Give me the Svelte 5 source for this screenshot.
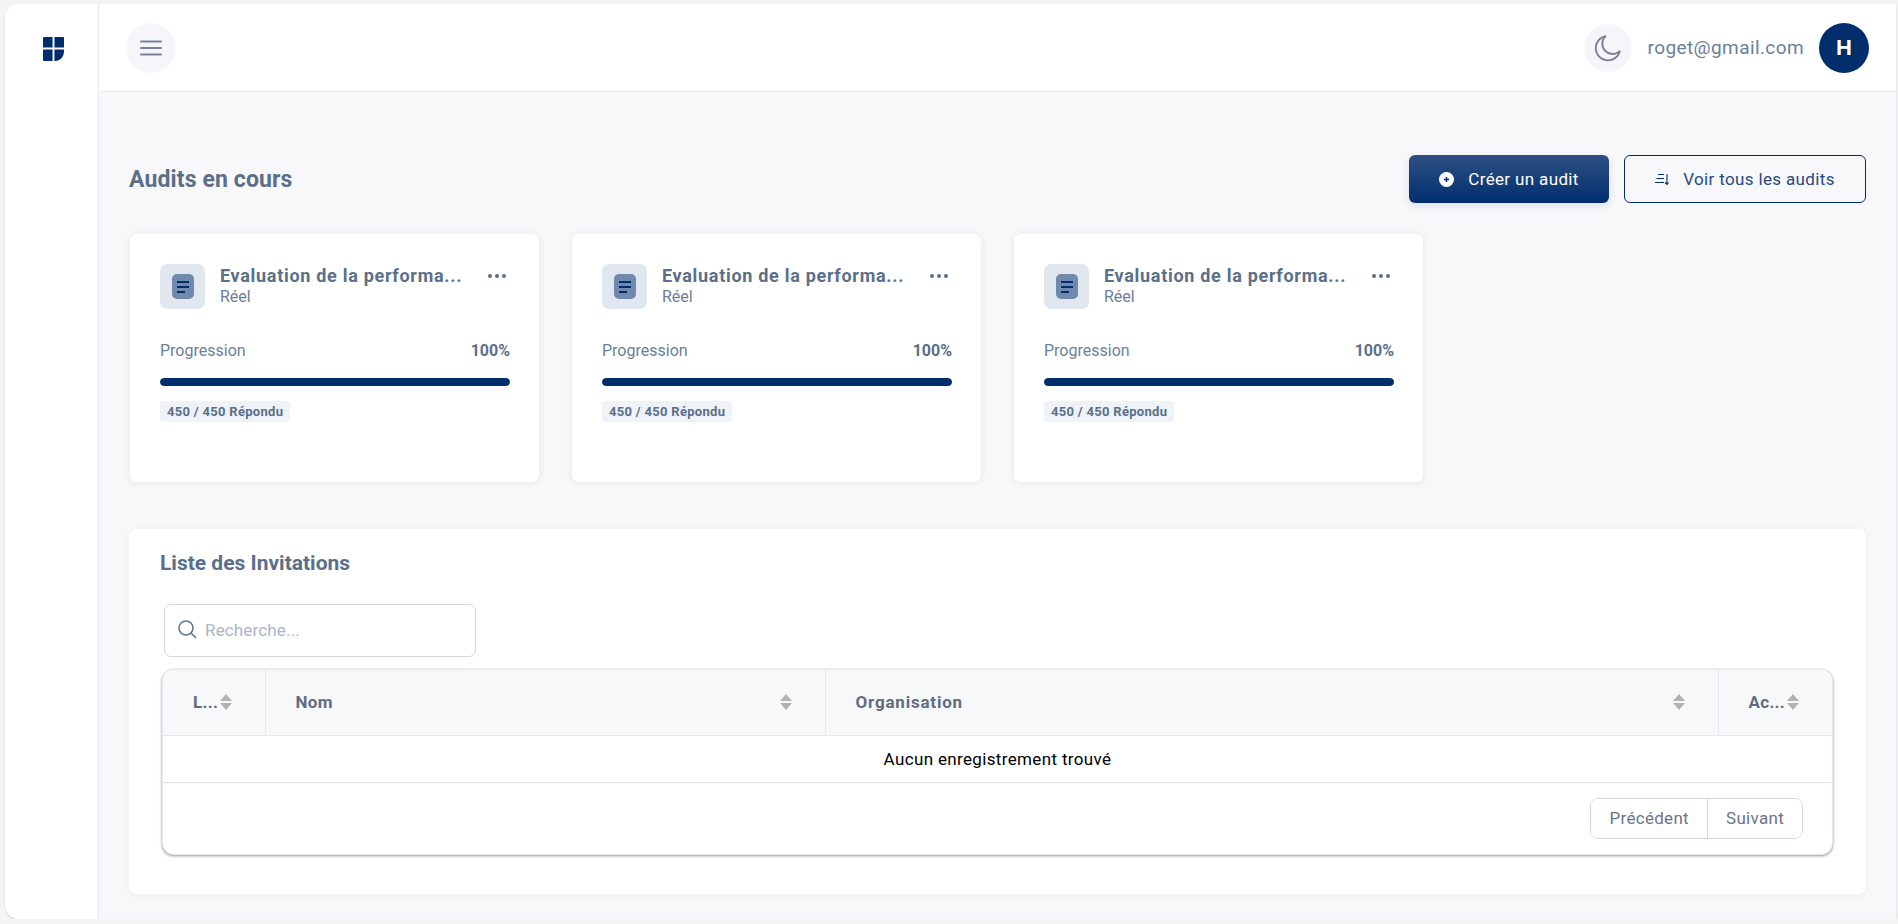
<script>
  const audits = [1, 2, 3];
  const columns = [
    { label: 'L...', cls: 'col-lang' },
    { label: 'Nom', cls: 'col-name' },
    { label: 'Organisation', cls: 'col-org' },
    { label: 'Ac...', cls: 'col-act' }
  ];
</script>

<div class="frame">
  <aside class="sidebar">
    <svg class="logo" width="21" height="24" viewBox="0 0 22 24" preserveAspectRatio="none">
      <path d="M1 0h9v10.500H0V1a1 1 0 0 1 1-1z" fill="#002e6d" />
      <path d="M12 0h9a1 1 0 0 1 1 1v9.500H12z" fill="#002e6d" />
      <path d="M0 12.500h10V24H1a1 1 0 0 1-1-1z" fill="#002e6d" />
      <path d="M12 12.500h10V15a9 9 0 0 1-9 9h-1z" fill="#002e6d" />
    </svg>
  </aside>

  <div class="main">
    <header class="topbar">
      <button class="round menu" aria-label="Menu">
        <svg width="24" height="16" viewBox="0 0 24 16" fill="none" stroke="#7b80a0" stroke-width="2" stroke-linecap="round">
          <path d="M2 1.500h20M2 8h20M2 14.500h20" />
        </svg>
      </button>
      <div class="user">
        <button class="round moon" aria-label="Thème">
          <svg width="30" height="30" viewBox="0 0 24 24" fill="none" stroke="#7b80a0" stroke-width="1.500" stroke-linecap="round" stroke-linejoin="round">
            <path d="M21.500 14.500A9.800 9.800 0 1 1 10 2.500a7.800 7.800 0 0 0 11.500 12z" />
          </svg>
        </button>
        <span class="email">roget@gmail.com</span>
        <div class="avatar">H</div>
      </div>
    </header>

    <main class="content">
      <div class="heading-row">
        <h2>Audits en cours</h2>
        <div class="actions">
          <button class="btn primary">
            <svg width="15" height="15" viewBox="0 0 15 15">
              <circle cx="7.500" cy="7.500" r="7.500" fill="#fff" />
              <path d="M7.500 5v5M5 7.500h5" stroke="#002e6d" stroke-width="1.400" />
            </svg>
            Créer un audit
          </button>
          <button class="btn outline">
            <svg width="14" height="14" viewBox="0 0 14 14" fill="none" stroke="#002e6d" stroke-width="1.100">
              <path d="M3 2.500h6M1.500 6.500h7.500M0 10.500h9M12 2v10.500M10 10.500l2 2 1.500-2" />
            </svg>
            Voir tous les audits
          </button>
        </div>
      </div>

      <div class="cards">
        {#each audits as audit (audit)}
          <article class="card">
            <div class="card-head">
              <div class="doc-box">
                <div class="doc">
                  <span class="line"></span>
                  <span class="line"></span>
                  <span class="line short"></span>
                </div>
              </div>
              <div class="card-title">
                <div class="name">Evaluation de la performa...</div>
                <div class="type">Réel</div>
              </div>
              <div class="dots"><span></span><span></span><span></span></div>
            </div>
            <div class="progress-labels">
              <span>Progression</span>
              <strong>100%</strong>
            </div>
            <div class="bar"><div class="fill" style="width: 100%"></div></div>
            <span class="badge">450 / 450 Répondu</span>
          </article>
        {/each}
      </div>

      <section class="panel">
        <h3>Liste des Invitations</h3>
        <div class="search">
          <svg width="20" height="20" viewBox="0 0 20 20" fill="none" stroke="#5f7590" stroke-width="1.600" stroke-linecap="round">
            <circle cx="9" cy="9" r="7" />
            <path d="M14 14l4.500 4.500" />
          </svg>
          <span>Recherche...</span>
        </div>

        <div class="table-wrap">
          <table>
            <thead>
              <tr>
                {#each columns as col (col.label)}
                  <th class={col.cls}>
                    <div class="th-inner">
                      <span class="th-label">{col.label}</span>
                      <span class="sort"><i class="up"></i><i class="down"></i></span>
                    </div>
                  </th>
                {/each}
              </tr>
            </thead>
            <tbody>
              <tr><td colspan="4">Aucun enregistrement trouvé</td></tr>
            </tbody>
          </table>
          <div class="pager">
            <div class="pager-group">
              <button>Précédent</button>
              <button>Suivant</button>
            </div>
          </div>
        </div>
      </section>
    </main>
  </div>
</div>

<style>
  :global(body) {
    margin: 0;
    background: #f4f4f5;
    font-family: Roboto, "Noto Sans", sans-serif;
  }
  button {
    font-family: inherit;
    cursor: pointer;
  }
  .frame {
    display: flex;
    box-sizing: border-box;
    height: 915px;
    margin: 4px 2px 0 5px;
    background: #f8f8fa;
    border-radius: 14px 0 0 14px;
    overflow: hidden;
    box-shadow: 0 1px 2px rgba(0, 0, 0, 0.18);
  }
  .sidebar {
    flex: 0 0 94px;
    box-sizing: border-box;
    background: #fff;
    border-right: 1px solid #e8e9f1;
    padding: 33px 0 0 38px;
  }
  .logo {
    display: block;
  }
  .main {
    flex: 1;
    min-width: 0;
    display: flex;
    flex-direction: column;
  }
  .topbar {
    flex: 0 0 88px;
    box-sizing: border-box;
    display: flex;
    align-items: center;
    justify-content: space-between;
    background: #fff;
    border-bottom: 1px solid #e9eaef;
    padding: 0 27px 0 27px;
  }
  .round {
    display: flex;
    align-items: center;
    justify-content: center;
    padding: 0;
    border: 0;
    border-radius: 50%;
    background: #f6f6fa;
  }
  .menu {
    width: 50px;
    height: 50px;
  }
  .moon {
    width: 48px;
    height: 48px;
  }
  .user {
    display: flex;
    align-items: center;
  }
  .email {
    margin: 0 15px 0 16px;
    font-size: 19px;
    color: #6b7f99;
    letter-spacing: 0.4px;
  }
  .avatar {
    width: 50px;
    height: 50px;
    border-radius: 50%;
    background: #002e6d;
    color: #fff;
    font: 700 22px "Liberation Sans", sans-serif;
    display: flex;
    align-items: center;
    justify-content: center;
  }
  .content {
    padding: 63px 30px 0 30px;
  }
  .heading-row {
    display: flex;
    align-items: center;
    justify-content: space-between;
    height: 48px;
  }
  h2 {
    margin: 0;
    padding-top: 1px;
    font-size: 23px;
    font-weight: 700;
    letter-spacing: 0.12px;
    color: #5a6f89;
  }
  .actions {
    display: flex;
    gap: 15px;
  }
  .btn {
    height: 48px;
    box-sizing: border-box;
    display: flex;
    align-items: center;
    justify-content: center;
    gap: 14px;
    border-radius: 6px;
    font-size: 17px;
    letter-spacing: 0.35px;
  }
  .primary {
    width: 200px;
    border: 0;
    color: #fff;
    background: linear-gradient(#2f5184, #002e6d);
    box-shadow: 0 3px 8px rgba(0, 46, 109, 0.12);
  }
  .outline {
    width: 242px;
    border: 1.500px solid #002e6d;
    color: #264a7e;
    background: transparent;
  }
  .cards {
    display: flex;
    gap: 31px;
    margin-top: 30px;
  }
  .card {
    box-sizing: border-box;
    width: 411px;
    height: 250px;
    padding: 30px 29px 0 30px;
    background: #fff;
    border: 1px solid #f0f0f3;
    border-radius: 8px;
    box-shadow: 0 1px 6px rgba(60, 70, 100, 0.08);
  }
  .card-head {
    display: flex;
    align-items: flex-start;
  }
  .doc-box {
    flex: 0 0 45px;
    height: 45px;
    border-radius: 7px;
    background: #e1e7ef;
    display: flex;
    align-items: center;
    justify-content: center;
  }
  .doc {
    box-sizing: border-box;
    width: 22px;
    height: 25px;
    border-radius: 5px;
    background: #7189ad;
    padding: 7px 5px 0 5px;
    display: flex;
    flex-direction: column;
    gap: 3px;
  }
  .line {
    display: block;
    height: 2px;
    background: #002e6d;
  }
  .line.short {
    width: 8px;
  }
  .card-title {
    margin-left: 15px;
    width: 242px;
  }
  .name {
    font-size: 18px;
    font-weight: 700;
    line-height: 22px;
    letter-spacing: 0.7px;
    margin-top: 1px;
    color: #5a6f89;
    white-space: nowrap;
  }
  .type {
    font-size: 16px;
    line-height: 20px;
    color: #6b7f99;
  }
  .dots {
    display: flex;
    gap: 3px;
    margin: 10px 0 0 26px;
  }
  .dots span {
    width: 4px;
    height: 4px;
    border-radius: 50%;
    background: #5a6f89;
  }
  .progress-labels {
    display: flex;
    justify-content: space-between;
    margin-top: 32px;
    font-size: 16px;
    line-height: 20px;
    color: #6b7f99;
  }
  .progress-labels strong {
    color: #5a6f89;
  }
  .bar {
    height: 8px;
    margin-top: 17px;
    border-radius: 4px;
    background: #e1e7ef;
    overflow: hidden;
  }
  .fill {
    height: 100%;
    background: #002e6d;
    border-radius: 4px;
  }
  .badge {
    display: inline-block;
    margin-top: 15px;
    padding: 0 7px;
    font-size: 13px;
    font-weight: 700;
    line-height: 21px;
    letter-spacing: 0.3px;
    color: #5a6f89;
    background: #eff2f6;
    border-radius: 4px;
  }
  .panel {
    box-sizing: border-box;
    height: 365px;
    margin-top: 46px;
    padding: 22px 32px 0 31px;
    background: #fff;
    border-radius: 8px;
    box-shadow: 0 1px 6px rgba(60, 70, 100, 0.07);
  }
  h3 {
    margin: 0;
    font-size: 21px;
    font-weight: 700;
    line-height: 24px;
    color: #5a6f89;
  }
  .search {
    box-sizing: border-box;
    width: 312px;
    height: 53px;
    margin: 29px 0 0 4px;
    padding: 0 12px 4px;
    display: flex;
    align-items: center;
    gap: 8px;
    border: 1px solid #d4d7e0;
    border-radius: 7px;
    font-size: 17px;
    letter-spacing: 0.15px;
    color: #a9b5c6;
  }
  .search span {
    margin-top: 2px;
  }
  .table-wrap {
    box-sizing: border-box;
    width: 1671px;
    margin: 12px 0 0 2px;
    background: #fff;
    border: 1px solid #e6e7ec;
    border-radius: 12px;
    box-shadow: 0 1px 3px rgba(0, 0, 0, 0.42);
    overflow: hidden;
  }
  table {
    width: 100%;
    table-layout: fixed;
    border-collapse: collapse;
  }
  th {
    box-sizing: border-box;
    height: 65px;
    padding: 0 32px 0 30px;
    background: #f7f8fa;
    border-bottom: 1px solid #e6e7ec;
    border-right: 1px solid #e6e7ec;
    text-align: left;
  }
  th:last-child {
    border-right: 0;
  }
  .col-lang {
    width: 102px;
  }
  .col-name {
    width: 560px;
  }
  .col-org {
    width: 893px;
  }
  .col-act {
    width: 114px;
  }
  .th-inner {
    display: flex;
    align-items: center;
    justify-content: space-between;
  }
  .th-label {
    font-size: 17px;
    font-weight: 700;
    color: #636b7e;
    white-space: nowrap;
    letter-spacing: 0.3px;
  }
  .col-org .th-label {
    letter-spacing: 0.8px;
  }
  .sort {
    flex: 0 0 13px;
    display: flex;
    flex-direction: column;
    gap: 2px;
  }
  .sort i {
    display: block;
    width: 0;
    height: 0;
    border-left: 6.500px solid transparent;
    border-right: 6.500px solid transparent;
  }
  .up {
    border-bottom: 7px solid #b2b2b2;
  }
  .down {
    border-top: 7px solid #b2b2b2;
  }
  td {
    height: 46px;
    padding: 0;
    text-align: center;
    font-size: 17px;
    letter-spacing: 0.35px;
    color: #000;
    border-bottom: 1px solid #dfe0e7;
  }
  .pager {
    display: flex;
    justify-content: flex-end;
    padding: 15px 29px 15px 0;
  }
  .pager-group {
    display: flex;
    height: 41px;
    box-sizing: border-box;
    border: 1px solid #d4d7e0;
    border-radius: 8px;
    overflow: hidden;
  }
  .pager-group button {
    padding: 0 18px;
    border: 0;
    background: #fff;
    font-size: 17px;
    letter-spacing: 0.3px;
    color: #6d7488;
  }
  .pager-group button + button {
    border-left: 1px solid #d4d7e0;
  }
</style>
